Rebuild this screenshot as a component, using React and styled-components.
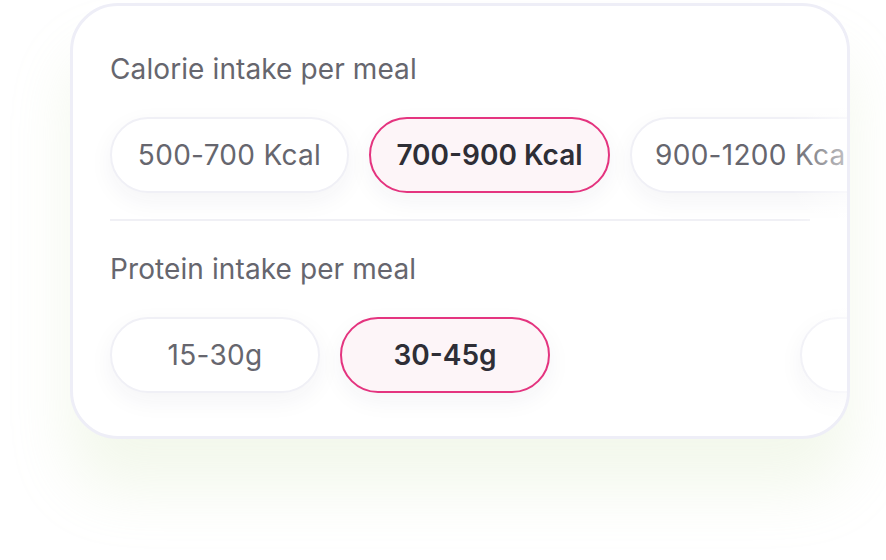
import React from 'react';
import styled, { createGlobalStyle } from 'styled-components';

const GlobalStyle = createGlobalStyle`
  html, body {
    margin: 0;
    padding: 0;
    background: #ffffff;
  }
  body {
    font-family: Inter, "Noto Sans", sans-serif;
  }
`;

const Page = styled.div`
  width: 886px;
  height: 560px;
  padding: 3px 0 0 70px;
  box-sizing: border-box;
  overflow: hidden;
`;

const Card = styled.div`
  position: relative;
  width: 780px;
  height: 436px;
  box-sizing: border-box;
  border: 3px solid #eeeef7;
  border-radius: 48px;
  background: #ffffff;
  overflow: hidden;
  padding: 45px 0 0 37px;
  box-shadow: 0 50px 60px rgba(200, 225, 170, 0.22);
`;

const Section = styled.div`
  display: flex;
  flex-direction: column;
  gap: ${p => p.$gap}px;
`;

const Label = styled.div`
  font-size: 28px;
  line-height: 36px;
  color: #66666e;
  letter-spacing: 0.1px;
`;

const Row = styled.div`
  display: flex;
  gap: 20px;
  padding-bottom: 10px;
`;

const Chip = styled.div`
  flex: none;
  display: flex;
  align-items: center;
  justify-content: ${p => (p.$start ? 'flex-start' : 'center')};
  padding-left: ${p => (p.$start ? '23px' : '0')};
  box-sizing: border-box;
  height: 76px;
  width: ${p => p.$w}px;
  border-radius: 38px;
  font-size: 28px;
  letter-spacing: ${p => (p.$active ? '0' : '0.3px')};
  white-space: nowrap;
  border: 2px solid ${p => (p.$active ? '#e4347f' : '#f0f0f6')};
  background: ${p => (p.$active ? '#fdf5f8' : '#ffffff')};
  color: ${p => (p.$active ? '#2e2e36' : '#66666e')};
  font-weight: ${p => (p.$active ? 600 : 400)};
  box-shadow: 0 8px 24px rgba(40, 40, 80, 0.05);
`;

const Spacer = styled.div`
  flex: none;
  width: ${p => p.$w}px;
`;

const Divider = styled.div`
  width: 700px;
  height: 2px;
  background: #f0f0f5;
  margin: 16px 0 30px;
`;

const Fade = styled.div`
  position: absolute;
  top: 0;
  right: 0;
  width: 56px;
  height: 100%;
  background: linear-gradient(to right, rgba(255, 255, 255, 0), rgba(255, 255, 255, 0.6));
  pointer-events: none;
`;

const calories = [
  { label: '500-700 Kcal', w: 239 },
  { label: '700-900 Kcal', w: 241, active: true },
  { label: '900-1200 Kcal', w: 280, start: true },
];

const protein = [
  { label: '15-30g', w: 210 },
  { label: '30-45g', w: 210, active: true },
  { label: '', w: 230, gap: 210 },
];

const App = () => (
  <>
    <GlobalStyle />
    <Page>
      <Card>
        <Section $gap={30}>
          <Label>Calorie intake per meal</Label>
          <Row>
            {calories.map(c => (
              <Chip key={c.label} $w={c.w} $active={c.active} $start={c.start}>
                {c.label}
              </Chip>
            ))}
          </Row>
        </Section>
        <Divider />
        <Section $gap={30}>
          <Label>Protein intake per meal</Label>
          <Row>
            {protein.map((c, i) =>
              c.gap ? (
                <React.Fragment key={i}>
                  <Spacer $w={c.gap} />
                  <Chip $w={c.w} />
                </React.Fragment>
              ) : (
                <Chip key={i} $w={c.w} $active={c.active}>
                  {c.label}
                </Chip>
              )
            )}
          </Row>
        </Section>
        <Fade />
      </Card>
    </Page>
  </>
);

export default App;
